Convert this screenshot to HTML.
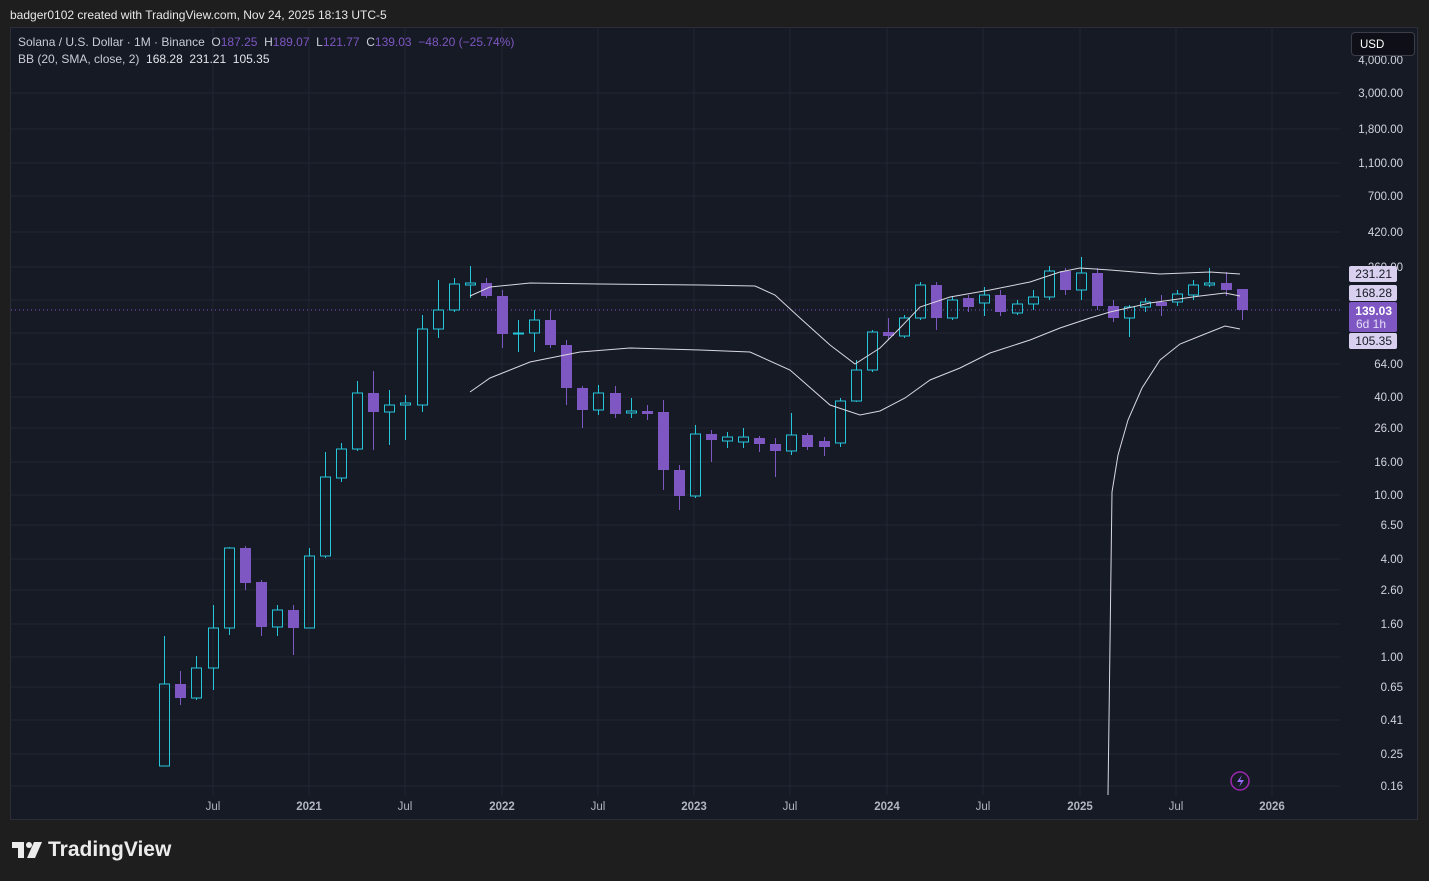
<!DOCTYPE html>
<html><head><meta charset="utf-8"><style>
html,body{margin:0;padding:0;background:#1f1e1e;width:1429px;height:881px;overflow:hidden;font-family:"Liberation Sans",sans-serif}
.hdr{position:absolute;left:10px;top:8px;color:#e8e8e8;font-size:12px}
.chart{position:absolute;left:10px;top:27px;width:1408px;height:793px;background:#161a25;border:1px solid #2b2e38;box-sizing:border-box}
.leg{position:absolute;left:18px;font-size:12px;color:#c9ccd6}
.v{color:#7e57c2}
.b{color:#e3e5ec}
.usd{position:absolute;left:1351px;top:32px;width:64px;height:24px;background:#0f1017;border:1px solid #3a3d48;border-radius:4px;color:#fff;font-size:11.5px;line-height:24px;padding-left:8px;box-sizing:border-box}
.logo{position:absolute;left:12px;top:838px;color:#ececec;font-size:21px;font-weight:bold;display:flex;align-items:center;gap:6px}
</style></head><body>
<div class="hdr">badger0102 created with TradingView.com, Nov 24, 2025 18:13 UTC-5</div>
<div class="chart"></div>
<svg id="s" width="1429" height="881" style="position:absolute;left:0;top:0"></svg>
<div class="leg" style="top:35px">Solana / U.S. Dollar · 1M · Binance &nbsp;O<span class="v">187.25</span> &nbsp;H<span class="v">189.07</span> &nbsp;L<span class="v">121.77</span> &nbsp;C<span class="v">139.03</span> &nbsp;<span class="v">−48.20 (−25.74%)</span></div>
<div class="leg" style="top:52px">BB (20, SMA, close, 2) &nbsp;<span class="b">168.28 &nbsp;231.21 &nbsp;105.35</span></div>
<div class="usd">USD</div>
<div class="logo"><svg width="30" height="16" viewBox="0 0 30 16"><path d="M0 0h12v16h-6v-10h-6z" fill="#ececec"/><circle cx="17" cy="3" r="3" fill="#ececec"/><path d="M22 0h8l-7 16h-8z" fill="#ececec"/></svg>TradingView</div>
<script>
const s=document.getElementById('s');let h='';
const gy=[93,129,163,196,232,267,300,333,364,397,428,462,495,525,559,590,624,657,687,720,754,786];
gy.forEach(y=>h+=`<line x1="11" x2="1340" y1="${y}" y2="${y}" stroke="#232733"/>`);
const xs=[[213,'Jul'],[309,'2021'],[405,'Jul'],[502,'2022'],[598,'Jul'],[694,'2023'],[790,'Jul'],[887,'2024'],[983,'Jul'],[1080,'2025'],[1176,'Jul'],[1272,'2026']];
xs.forEach(([x,t])=>{h+=`<line x1="${x}" x2="${x}" y1="28" y2="795" stroke="#232733"/><text x="${x}" y="810" fill="#b2b5be" font-size="11.5" text-anchor="middle" font-weight="${t.length>3?'bold':'normal'}">${t}</text>`});
const pl=[[60,'4,000.00'],[93,'3,000.00'],[129,'1,800.00'],[163,'1,100.00'],[196,'700.00'],[232,'420.00'],[267,'260.00'],[364,'64.00'],[397,'40.00'],[428,'26.00'],[462,'16.00'],[495,'10.00'],[525,'6.50'],[559,'4.00'],[590,'2.60'],[624,'1.60'],[657,'1.00'],[687,'0.65'],[720,'0.41'],[754,'0.25'],[786,'0.16']];
pl.forEach(([y,t])=>h+=`<text x="1403" y="${y+4}" fill="#d1d4dc" font-size="11.5" text-anchor="end">${t}</text>`);
h+=`<line x1="11" x2="1340" y1="310" y2="310" stroke="#7e57c2" stroke-dasharray="1,3"/>`;
const c=[[-9,766,684,636,766],[-8,684,698,671,705],[-7,698,668,656,700],[-6,668,628,605,690],[-5,628,548,547,635],[-4,548,583,546,590],[-3,582,627,580,636],[-2,627,610,605,636],[-1,610,628,605,655],
[0,628,556,548,628],[1,556,477,452,558],[2,478,449,443,482],[3,449,393,381,451],[4,393,412,371,450],[5,412,405,390,445],[6,405,403,395,440],[7,405,329,315,412],[8,329,310,280,338],[9,310,284,278,312],[10,285,283,266,298],[11,283,296,278,298],
[12,296,334,290,348],[13,334,333,320,352],[14,333,320,310,352],[15,320,345,310,348],[16,345,388,340,405],[17,388,410,386,428],[18,410,393,385,415],[19,393,414,386,418],[20,413,411,398,418],[21,411,414,405,420],[22,412,470,400,490],[23,470,496,465,510],
[24,496,434,425,498],[25,434,440,430,462],[26,441,437,432,448],[27,442,437,428,448],[28,438,444,436,452],[29,444,451,438,477],[30,451,435,413,455],[31,435,447,433,450],[32,441,447,437,456],[33,443,401,398,447],[34,401,370,360,402],[35,370,332,330,372],
[36,332,336,318,340],[37,336,318,315,338],[38,318,285,282,320],[39,285,318,282,330],[40,318,300,296,320],[41,298,307,295,312],[42,303,295,287,316],[43,295,312,290,316],[44,313,304,300,315],[45,304,297,290,310],[46,297,271,266,300],[47,271,290,268,295],
[48,290,273,257,300],[49,273,306,268,310],[50,306,318,300,322],[51,318,307,305,337],[52,307,302,298,312],[53,302,306,295,316],[54,302,294,290,306],[55,295,285,280,300],[56,285,283,268,287],[57,283,290,272,296],[58,289,310,290,320]];
c.forEach(([m,o,cl,hi,lo])=>{const x=Math.round(309+16.08*m)+0.5;const bull=cl<o;const col=bull?'#26c6da':'#7e57c2';const t=Math.min(o,cl),b=Math.max(o,cl,t+1);
h+=`<line x1="${x}" x2="${x}" y1="${hi}" y2="${t}" stroke="${col}"/><line x1="${x}" x2="${x}" y1="${b}" y2="${lo}" stroke="${col}"/>`;
h+=bull?`<rect x="${x-5}" y="${t}" width="10" height="${b-t}" fill="none" stroke="${col}"/>`:`<rect x="${x-5.5}" y="${t}" width="11" height="${b-t}" fill="${col}"/>`;});
const pth=p=>`<polyline fill="none" stroke="#d8d8e0" stroke-width="1" points="${p}"/>`;
h+=pth('470,296 490,287 530,283 600,284 700,285 755,286 775,295 800,318 830,345 855,364 880,348 900,328 920,307 950,297 990,290 1030,282 1060,272 1080,268 1110,270 1160,274 1210,272 1240,274');
h+=pth('470,392 490,378 530,362 580,352 630,348 700,350 750,352 790,370 830,405 860,415 880,411 905,398 930,380 960,368 990,353 1030,340 1060,328 1090,318 1110,312 1150,303 1200,296 1225,293 1240,296');
h+=pth('1108,795 1112,492 1118,455 1128,420 1142,388 1160,360 1180,344 1200,336 1225,326 1240,329');
const lab=(y,t,bg,fg)=>h+=`<rect x="1349" y="${y-8}" width="48" height="16" rx="2" fill="${bg}"/><text x="1392" y="${y+4}" fill="${fg}" font-size="12" text-anchor="end">${t}</text>`;
lab(274,'231.21','#d8d0ee','#161a25');lab(293,'168.28','#d8d0ee','#161a25');lab(341,'105.35','#d8d0ee','#161a25');
h+=`<rect x="1349" y="302" width="48" height="30" rx="2" fill="#7e57c2"/><text x="1392" y="315" fill="#fff" font-size="12" text-anchor="end" font-weight="bold">139.03</text><text x="1356" y="328" fill="#e6ddf7" font-size="12">6d 1h</text>`;
h+=`<circle cx="1240" cy="781" r="9" fill="none" stroke="#9c27b0" stroke-width="1.5"/><path d="M1242 775l-5 7h4l-2 5 5-7h-4z" fill="#9c6cff"/>`;
s.innerHTML=h;
</script>
</body></html>
